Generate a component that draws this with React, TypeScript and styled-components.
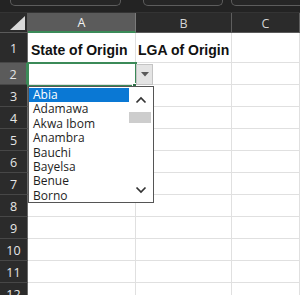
import React from "react";
import styled, { createGlobalStyle } from "styled-components";

const GlobalStyle = createGlobalStyle`
  html, body { margin: 0; padding: 0; background: #ffffff; }
  body { font-family: "Open Sans", "Liberation Sans", sans-serif; }
  * { box-sizing: border-box; }
`;

const GREEN = "#3b8a58";

const Frame = styled.div`
  position: relative;
  width: 300px;
  height: 295px;
  overflow: hidden;
  background: #ffffff;
`;

const TopStrip = styled.div`
  height: 13px;
  background: #232323;
  border-bottom: 1px solid #343434;
  display: flex;
  align-items: flex-start;
`;

const FieldBox = styled.div<{ $ml: number; $w: number }>`
  margin-left: ${(p) => p.$ml}px;
  width: ${(p) => p.$w}px;
  flex: none;
  height: 6px;
  border: 1px solid #5d5d5d;
  border-top: none;
  border-radius: 0 0 5px 5px;
  background: #262626;
`;

const Sheet = styled.div`
  display: grid;
  grid-template-columns: 28px 108px 96px 1fr;
  grid-template-rows: 20px 30px repeat(11, 22px);
`;

const Corner = styled.div`
  background: #2b2b2b;
  border-right: 1px solid #5a5a5a;
  border-bottom: 1px solid #5a5a5a;
  position: relative;
  display: flex;
  align-items: flex-end;
  justify-content: flex-end;
  padding: 0 2px 2px 0;
`;

const ColHeader = styled.div<{ $selected?: boolean }>`
  background: ${(p) => (p.$selected ? "#5b5b5b" : "#2b2b2b")};
  color: ${(p) => (p.$selected ? "#f2f2f2" : "#d4d4d4")};
  border-right: 1px solid ${(p) => (p.$selected ? "#7a7a7a" : "#5e5e5e")};
  border-bottom: ${(p) => (p.$selected ? `2px solid ${GREEN}` : "1px solid #5a5a5a")};
  font-family: "Open Sans", sans-serif;
  font-size: 12.5px;
  display: flex;
  align-items: center;
  justify-content: center;
  padding-top: 1px;
`;

const RowHeader = styled.div<{ $selected?: boolean }>`
  background: ${(p) => (p.$selected ? "#5b5b5b" : "#2b2b2b")};
  color: #e6e6e6;
  border-right: ${(p) => (p.$selected ? `2px solid ${GREEN}` : "1px solid #6a6a6a")};
  border-bottom: 1px solid #474747;
  font-family: "Open Sans", sans-serif;
  font-size: 12.5px;
  display: flex;
  align-items: center;
  justify-content: center;
  padding-top: 1px;
`;

const Cell = styled.div<{ $bold?: boolean }>`
  background: #ffffff;
  border-right: 1px solid #e0e0e0;
  border-bottom: 1px solid #e0e0e0;
  display: flex;
  align-items: flex-end;
  padding: 0 0 4px 3px;
  font-family: "Liberation Sans", Arial, sans-serif;
  font-weight: ${(p) => (p.$bold ? 700 : 400)};
  font-size: 14px;
  color: #111111;
  white-space: nowrap;
  overflow: visible;
`;

const SelectionBox = styled.div`
  position: absolute;
  left: 27px;
  top: 62px;
  width: 110px;
  height: 25px;
  border: 2px solid ${GREEN};
  pointer-events: none;
`;

const FillHandle = styled.div`
  position: absolute;
  left: 132px;
  top: 83px;
  width: 5px;
  height: 5px;
  background: #2f6e47;
  border: 1px solid #ffffff;
`;

const DropButton = styled.div`
  position: absolute;
  left: 136px;
  top: 64px;
  width: 17px;
  height: 21px;
  background: #e4e4e4;
  border: 1px solid #c4c4c4;
  display: flex;
  align-items: center;
  justify-content: center;
`;

const DropList = styled.div`
  position: absolute;
  left: 28px;
  top: 86px;
  width: 126px;
  height: 117px;
  background: #ffffff;
  border: 1px solid #555555;
  display: flex;
`;

const Items = styled.div`
  width: 100px;
  flex: none;
  padding-top: 1px;
  display: flex;
  flex-direction: column;
`;

const Item = styled.div<{ $active?: boolean }>`
  height: 14.4px;
  line-height: 14.4px;
  padding-left: 4px;
  font-family: "Open Sans", sans-serif;
  font-size: 12px;
  color: ${(p) => (p.$active ? "#ffffff" : "#1e1e1e")};
  background: ${(p) => (p.$active ? "#0a78d4" : "transparent")};
  white-space: nowrap;
`;

const Scrollbar = styled.div`
  flex: 1;
  display: flex;
  flex-direction: column;
`;

const ArrowBtn = styled.div<{ $h: number }>`
  height: ${(p) => p.$h}px;
  display: flex;
  align-items: center;
  justify-content: center;
  padding-right: 1px;
`;

const Thumb = styled.div`
  height: 11px;
  width: 22px;
  background: #cdcdcd;
`;

const Spacer = styled.div`
  flex: 1;
`;

const states = [
  "Abia",
  "Adamawa",
  "Akwa Ibom",
  "Anambra",
  "Bauchi",
  "Bayelsa",
  "Benue",
  "Borno",
];

const Chevron = ({ up }: { up?: boolean }) => (
  <svg width="12" height="8" viewBox="0 0 12 8">
    <polyline
      points={up ? "1.5,6.5 6,2 10.5,6.5" : "1.5,1.5 6,6 10.5,1.5"}
      fill="none"
      stroke="#333333"
      strokeWidth="1.7"
    />
  </svg>
);

export default function App() {
  const rows = Array.from({ length: 12 }, (_, i) => i + 1);
  return (
    <Frame>
      <GlobalStyle />
      <TopStrip>
        <FieldBox $ml={10} $w={111} />
        <FieldBox $ml={22} $w={80} />
        <FieldBox $ml={8} $w={80} />
      </TopStrip>
      <Sheet>
        <Corner>
          <svg width="15" height="14" viewBox="0 0 15 14">
            <polygon points="15,0 15,14 0,14" fill="#d9d9d9" />
          </svg>
        </Corner>
        <ColHeader $selected>A</ColHeader>
        <ColHeader>B</ColHeader>
        <ColHeader>C</ColHeader>
        {rows.map((r) => (
          <React.Fragment key={r}>
            <RowHeader $selected={r === 2}>{r}</RowHeader>
            <Cell $bold={r === 1}>{r === 1 ? "State of Origin" : ""}</Cell>
            <Cell $bold={r === 1} style={{ paddingLeft: 2 }}>
              {r === 1 ? "LGA of Origin" : ""}
            </Cell>
            <Cell />
          </React.Fragment>
        ))}
      </Sheet>
      <SelectionBox />
      <FillHandle />
      <DropButton>
        <svg width="8" height="5" viewBox="0 0 8 5">
          <polygon points="0,0 8,0 4,4.5" fill="#5a5a5a" />
        </svg>
      </DropButton>
      <DropList>
        <Items>
          {states.map((s, i) => (
            <Item key={s} $active={i === 0}>
              {s}
            </Item>
          ))}
        </Items>
        <Scrollbar>
          <ArrowBtn $h={25}>
            <Chevron up />
          </ArrowBtn>
          <Thumb />
          <Spacer />
          <ArrowBtn $h={24}>
            <Chevron />
          </ArrowBtn>
        </Scrollbar>
      </DropList>
    </Frame>
  );
}
